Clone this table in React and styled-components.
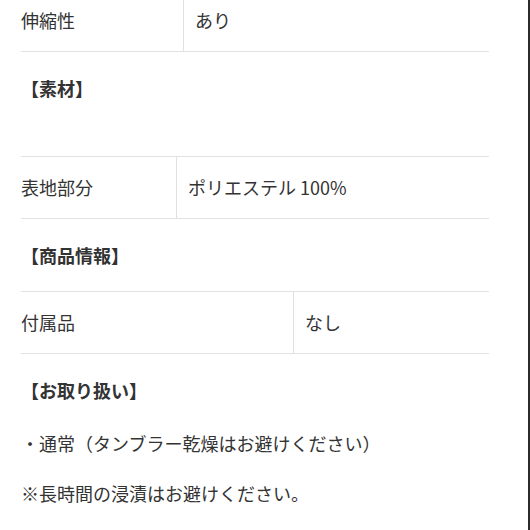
import styled, { createGlobalStyle } from "styled-components";

const GlobalStyle = createGlobalStyle`
    html, body {
        margin: 0;
        padding: 0;
        background: #ffffff;
    }
    body {
        font-family: "Noto Sans CJK JP", "Noto Sans", sans-serif;
        color: #333333;
        overflow: hidden;
    }
`;

const Frame = styled.div`
    width: 530px;
    height: 530px;
    box-sizing: border-box;
    border-right: 2px solid #2b2b2b;
    overflow: hidden;
`;

const Content = styled.div`
    width: 468px;
    margin: -11px 0 0 21px;
    font-size: 18px;
`;

const Table = styled.div`
    display: flex;
    flex-direction: column;
`;

const Row = styled.div`
    display: grid;
    grid-template-columns: ${(p) => p.$label}px 1fr;
    border-top: 1px solid #e2e2e2;
    border-bottom: 1px solid #e2e2e2;
`;

const Label = styled.div`
    padding: 16px 0 17px;
    line-height: 28px;
    border-right: 1px solid #e0e0e0;
`;

const Value = styled.div`
    padding: 16px 11px 17px;
    line-height: 28px;
`;

const Heading = styled.h3`
    margin: 22px 0 ${(p) => (p.$gap ? p.$gap : 22)}px;
    font-size: 18px;
    font-weight: 700;
    line-height: 28px;
    color: #333333;
`;

const Note = styled.p`
    margin: 0 0 22px;
    line-height: 28px;
`;

const Spacer = styled.div`
    height: 32px;
`;

const App = () => {
    return (
        <Frame>
            <GlobalStyle />
            <Content>
                <Table>
                    <Row $label={163}>
                        <Label>伸縮性</Label>
                        <Value>あり</Value>
                    </Row>
                </Table>

                <Heading>【素材】</Heading>
                <Spacer />
                <Table>
                    <Row $label={156}>
                        <Label>表地部分</Label>
                        <Value>ポリエステル 100%</Value>
                    </Row>
                </Table>

                <Heading>【商品情報】</Heading>
                <Table>
                    <Row $label={273}>
                        <Label>付属品</Label>
                        <Value>なし</Value>
                    </Row>
                </Table>

                <Heading $gap={25}>【お取り扱い】</Heading>
                <Note>・通常（タンブラー乾燥はお避けください）</Note>
                <Note>※長時間の浸漬はお避けください。</Note>
            </Content>
        </Frame>
    );
};

export default App;
